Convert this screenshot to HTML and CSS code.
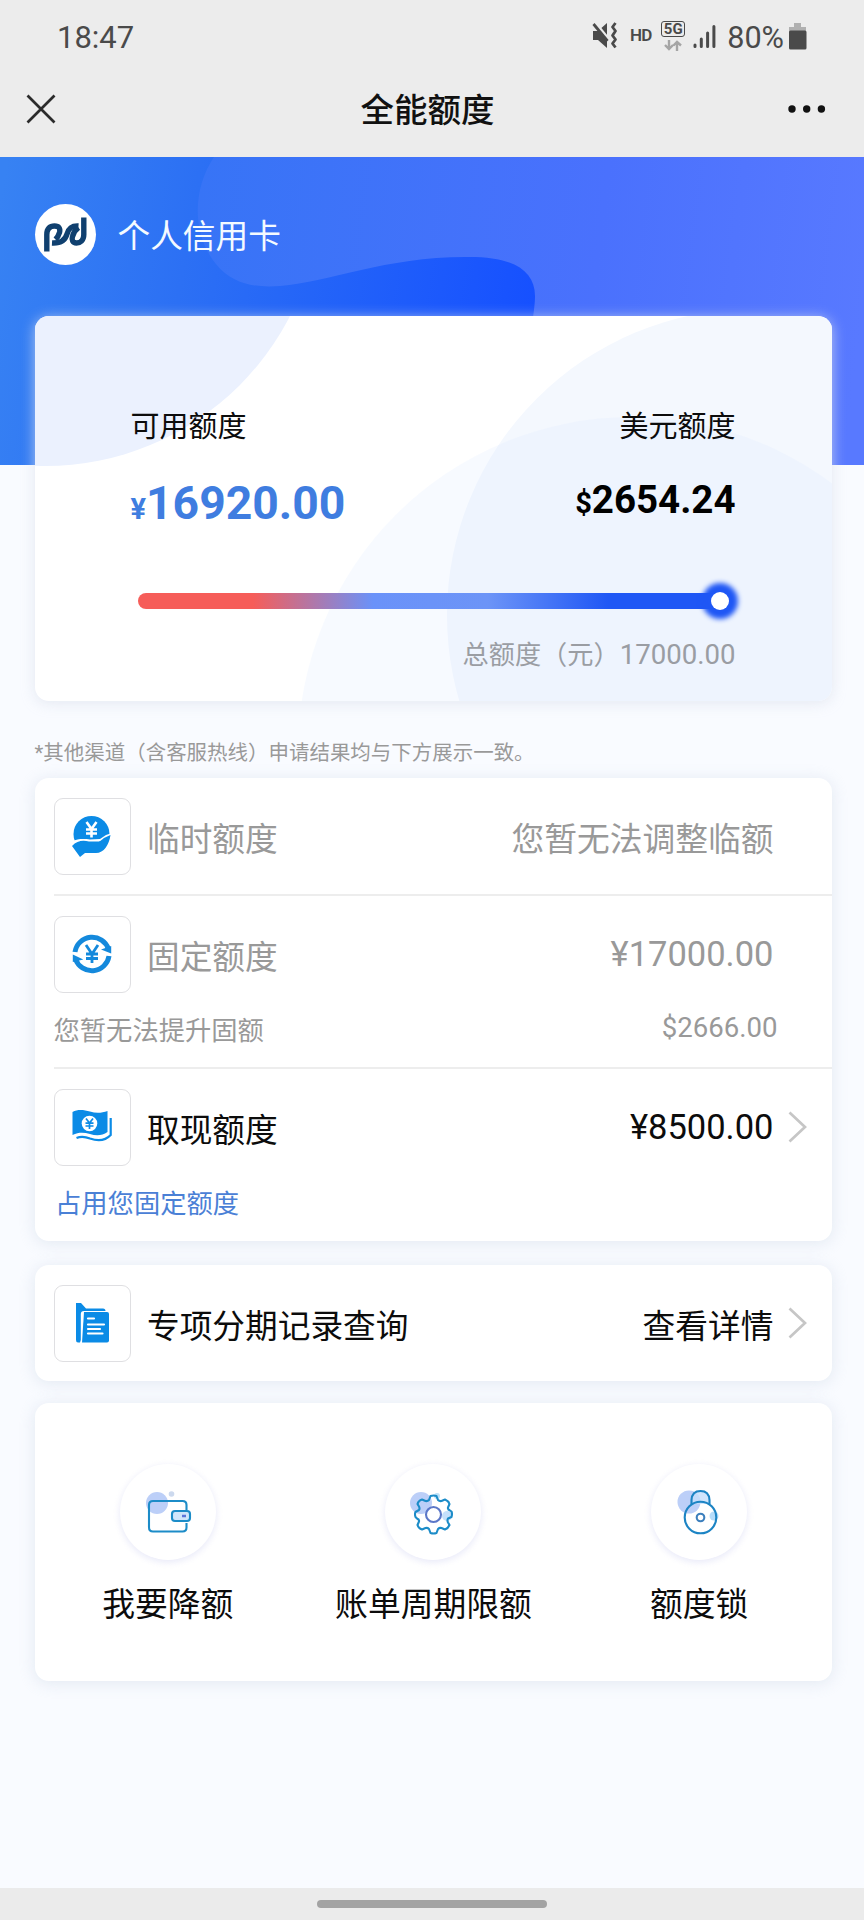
FILE: index.html
```html
<!DOCTYPE html>
<html lang="zh-CN">
<head>
<meta charset="utf-8">
<title>全能额度</title>
<link rel="stylesheet" href="styles.css">
</head>
<body>
<header class="top">
  <div class="status">
    <span class="time">18:47</span>
    <div class="indicators">
      <svg class="mute" width="26" height="28" viewBox="0 0 26 28">
        <path d="M1 9h5l9-8v25l-9-8H1z" fill="#4a4a4a"/>
        <path d="M1 -2l17 21" stroke="#ececec" stroke-width="3"/>
        <path d="M1.500 2l14 17" stroke="#4a4a4a" stroke-width="2.800"/>
        <path d="M23.500 1l-3 4 3 4-3 4.500 3 4-3 4 3 4" fill="none" stroke="#4a4a4a" stroke-width="2.800" stroke-linejoin="round"/>
      </svg>
      <span class="hd">HD</span>
      <div class="net">
        <span class="net-label">5G</span>
        <svg width="18" height="11" viewBox="0 0 18 11" fill="none" stroke="#a5a5a5" stroke-width="2.400"><path d="M5 0v9M1 5l4 4 4-4M13 11V2M9.500 5.500L13 2l4 3.500"/></svg>
      </div>
      <svg class="signal" width="23" height="25" viewBox="0 0 23 25" stroke="#4a4a4a" stroke-width="3" stroke-linecap="round"><path d="M2 21v1.500M8.300 15v7.500M14.600 9v13.500M20.900 2.500v20"/></svg>
      <span class="percent">80%</span>
      <svg class="battery" width="18" height="27" viewBox="0 0 18 27"><path d="M5 0h7v4h5v6H0V4h5z" fill="#b0b0b0"/><rect y="7.500" width="17.500" height="19" rx="1.500" fill="#4a4a4a"/></svg>
    </div>
  </div>
  <nav class="nav">
    <svg width="30" height="30" viewBox="0 0 30 30" stroke="#2b2b2b" stroke-width="2.700"><path d="M1.500 1.500l27 27M28.500 1.500l-27 27"/></svg>
    <h1 class="title">全能额度</h1>
    <svg width="38" height="8" viewBox="0 0 38 8" fill="#111"><circle cx="4" cy="4" r="3.700"/><circle cx="18.700" cy="4" r="3.700"/><circle cx="33.400" cy="4" r="3.700"/></svg>
  </nav>
</header>

<main class="page">
  <section class="hero">
    <svg class="hero-bg" width="864" height="308" viewBox="0 157 864 308">
      <defs>
        <linearGradient id="base" gradientUnits="userSpaceOnUse" x1="0" y1="200" x2="540" y2="290">
          <stop offset="0" stop-color="#3782f3"/><stop offset=".35" stop-color="#2c70f4"/><stop offset="1" stop-color="#1650ff"/>
        </linearGradient>
        <linearGradient id="wave" gradientUnits="userSpaceOnUse" x1="195" y1="220" x2="864" y2="300">
          <stop offset="0" stop-color="#3774f6"/><stop offset=".6" stop-color="#4a71fd"/><stop offset="1" stop-color="#5879ff"/>
        </linearGradient>
      </defs>
      <rect y="157" width="864" height="308" fill="url(#base)"/>
      <path d="M214 157C192 190 192 235 216 264C232 284 255 288 280 286C330 282 385 257 465 257C512 256 535 270 535 296C535 318 525 350 515 465H864V157Z" fill="url(#wave)"/>
    </svg>
    <div class="brand">
      <span class="logo">
        <svg width="61" height="61" viewBox="35 204.500 61 61" fill="none" stroke="#10406f" stroke-width="5.400">
          <path d="M46.800 252V235C46.800 229 50 226.500 54.500 226.500C59 226.500 60.500 229 59.500 233C58.500 236.500 57.500 238 55.500 240"/>
          <path d="M78.500 226.500C71 226 68.500 229.500 67 234.500C65.300 240.500 61 244 52 243.500"/>
          <path d="M83.800 218V235C83.800 241 80 243.500 76.500 243.500C72.500 243.500 71.500 240.500 72.500 237C73.500 233 75 230.500 78.500 228"/>
        </svg>
      </span>
      <span class="brand-name">个人信用卡</span>
    </div>
    <div class="quota">
      <svg class="quota-bg" width="797" height="385" viewBox="35 316 797 385">
        <circle cx="45" cy="191" r="275" fill="#ebf1fe"/>
        <circle cx="753" cy="615" r="306" fill="#f4f8fe"/>
        <circle cx="632" cy="751" r="334" fill="#d9e6fd" fill-opacity=".22"/>
      </svg>
      <div class="quota-row">
        <div>
          <div class="quota-label">可用额度</div>
          <div class="cny"><span class="unit">¥</span>16920.00</div>
        </div>
        <div class="right">
          <div class="quota-label">美元额度</div>
          <div class="usd"><span class="unit">$</span>2654.24</div>
        </div>
      </div>
      <div class="track"><span class="thumb"></span></div>
      <div class="total">总额度（元）<span class="total-num">17000.00</span></div>
    </div>
  </section>

  <p class="note">*其他渠道（含客服热线）申请结果均与下方展示一致。</p>

  <section class="panel">
    <div class="item muted">
      <div class="line">
        <span class="box"><svg width="40" height="42" viewBox="0 0 40 42">
          <circle cx="19.500" cy="19" r="18" fill="#0b8be6"/>
          <path d="M0 26.500C6 23.500 12 24 18 24.500L28 24L34 20L40 18V42H0Z" fill="#fff"/>
          <path d="M0 31C5 25.500 11 25 17 26.500H26C29 26.500 30 24 33 22.500L38.500 20C37 30 32 38 24 38H13L8 42Z" fill="#0b8be6"/>
          <path d="M14.500 7l5 7 5-7M19.500 13.500v9M14 14.500h11M14 18.500h11" fill="none" stroke="#fff" stroke-width="2.600"/>
        </svg></span>
        <span class="name">临时额度</span>
        <span class="value">您暂无法调整临额</span>
      </div>
    </div>
    <div class="item muted">
      <div class="line">
        <span class="box"><svg width="40" height="42" viewBox="0 0 40 42">
          <path d="M3 19A17.300 17.300 0 0 1 36.500 16M37 23A17.300 17.300 0 0 1 3.500 26" fill="none" stroke="#1489dc" stroke-width="5"/>
          <path d="M39.200 13v7.500L29 16.500ZM.8 29V21.500l10.500 5Z" fill="#1489dc"/>
          <path d="M14 12l6 9 6-9M20 20v10M14 21h12M14 25.500h12" fill="none" stroke="#1489dc" stroke-width="2.800"/>
        </svg></span>
        <span class="name">固定额度</span>
        <span class="value amount">¥17000.00</span>
      </div>
      <div class="sub"><span>您暂无法提升固额</span><span class="sub-num">$2666.00</span></div>
    </div>
    <div class="item">
      <div class="line">
        <span class="box"><svg width="40" height="42" viewBox="0 0 40 42">
          <path d="M.5 6C6 3 12 4 18 5.500C24 7.500 30 7 35.500 5V26C30 30 24 30 18 28C12 26.500 7 26 .5 29Z" fill="#0b8be6"/>
          <path d="M38.700 12V29C33 35 25 35 18 32.500C13 30.500 8 30.500 4.500 32" fill="none" stroke="#0b8be6" stroke-width="2.200"/>
          <circle cx="17.500" cy="17.500" r="7.800" fill="#fff"/>
          <path d="M14 12.500l3.500 4.500L21 12.500M17.500 16.500v6.500M13.500 17.200h8M13.500 20h8" fill="none" stroke="#0b8be6" stroke-width="1.700"/>
        </svg></span>
        <span class="name">取现额度</span>
        <span class="value amount">¥8500.00</span>
        <svg class="chevron" width="19" height="32" viewBox="0 0 19 32"><path d="M1.500 1.500L17 16 1.500 30.500"/></svg>
      </div>
      <div class="sub link">占用您固定额度</div>
    </div>
  </section>

  <section class="panel records">
    <div class="item">
      <div class="line">
        <span class="box"><svg width="40" height="42" viewBox="0 0 40 42">
          <path d="M4 1H9L14 6.500H31Q33.500 6.500 33.500 9H12Q8.800 9 8.800 12V38L8 40.500H6Q4 40.500 4 38Z" fill="#0b8be6"/>
          <path d="M12 10H35Q37 10 37 12V38.500Q37 40.500 35 40.500H10Z" fill="#0b8be6"/>
          <path d="M16 16.500h6M16 22.500h16M16 27h12M16 31.500h14.500" stroke="#fff" stroke-width="2.200" stroke-linecap="round"/>
        </svg></span>
        <span class="name">专项分期记录查询</span>
        <span class="value">查看详情</span>
        <svg class="chevron" width="19" height="32" viewBox="0 0 19 32"><path d="M1.500 1.500L17 16 1.500 30.500"/></svg>
      </div>
    </div>
  </section>

  <section class="panel actions">
    <div class="action">
      <span class="disc"><svg width="96" height="96" viewBox="0 0 96 96" fill="none" stroke="#1c8cc8" stroke-width="2.100">
        <circle cx="37" cy="39" r="11" fill="#bccff8" stroke="none"/><circle cx="51.500" cy="30" r="2.800" fill="#ccd9ee" stroke="none"/>
        <path d="M66.500 46V41Q66.500 37 62.500 37H33Q29 37 29 41V63.500Q29 67.500 33 67.500H62.500Q66.500 67.500 66.500 63.500V59"/>
        <rect x="52" y="47" width="18" height="10" rx="3" fill="#d0e6fb"/><path d="M62 52h4" stroke="#5c75d8" stroke-width="2.500"/>
      </svg></span>
      <span>我要降额</span>
    </div>
    <div class="action">
      <span class="disc"><svg width="96" height="96" viewBox="0 0 96 96" fill="none" stroke="#1c8cc8" stroke-width="2.100">
        <circle cx="36" cy="39" r="11" fill="#bccff8" stroke="none"/><circle cx="52" cy="32" r="3" fill="#bce0f8" stroke="none"/><circle cx="62" cy="52" r="5" fill="#c5dffb" stroke="none"/>
        <path stroke-linejoin="round" d="M45.500 32Q48.500 31 51.500 32L53 36Q54.500 37.500 56.500 37L60 35.500Q63.500 37 64.500 40L63 43.500Q62.500 45.500 65 46.500L66.500 47.500Q67.500 50 66.500 53L63 54.500Q62 56.500 63 58.500L64.500 61Q63 64.500 60 65.500L56.500 64Q54.500 63.500 53 65L51.500 69Q48.500 70 45.500 69L44 65Q42.500 63.500 40.500 64L37 65.500Q33.500 64.500 32.500 61L34 57.500Q34.500 55.500 32 54.500L30.500 53Q29.500 50 30.500 48L34 46Q35 44.500 34 42.500L32.500 40Q33.500 36.500 37 35.500L40.500 37Q42.500 37.500 44 36Z"/>
        <circle cx="48.500" cy="50.500" r="7.500" stroke="#5b77c8"/>
      </svg></span>
      <span>账单周期限额</span>
    </div>
    <div class="action">
      <span class="disc"><svg width="96" height="96" viewBox="0 0 96 96" fill="none" stroke="#1c84c4" stroke-width="2.100">
        <circle cx="38" cy="38" r="11.500" fill="#bccff8" stroke="none"/><circle cx="63" cy="52" r="4.500" fill="#b5dcfa" stroke="none"/>
        <path d="M40.500 40V36Q41 27 49.500 27Q58 27 58.500 36V40" fill="#c5dffb" fill-opacity=".8"/>
        <circle cx="49.500" cy="53.500" r="15.800"/><circle cx="49.500" cy="53.500" r="3.800" stroke="#3c7fbd"/>
      </svg></span>
      <span>额度锁</span>
    </div>
  </section>
</main>
<footer class="gesture"><span class="pill"></span></footer>
</body>
</html>
```

FILE: styles.css
```css
* { box-sizing: border-box; }
body {
  margin: 0;
  width: 864px;
  height: 1920px;
  display: flex;
  flex-direction: column;
  overflow: hidden;
  background: #f9fbff;
  color: #0c0c0c;
  font-family: Roboto, "Noto Sans CJK SC", sans-serif;
}
svg { display: block; flex: none; }

.top { height: 157px; background: #ececec; }
.status {
  height: 74px;
  padding: 0 57px 0 57px;
  display: flex;
  justify-content: space-between;
  color: #4a4a4a;
}
.time { font-size: 31px; line-height: 75px; }
.indicators { display: flex; align-items: flex-start; }
.mute { margin-top: 22px; }
.hd { margin: 25px 0 0 12px; font-size: 17px; line-height: 20px; font-weight: 600; letter-spacing: -1px; }
.net { margin: 21px 0 0 10px; width: 24px; display: flex; flex-direction: column; align-items: center; gap: 3px; }
.net-label {
  width: 24px;
  height: 16px;
  border: 1px solid #4a4a4a;
  border-radius: 3px;
  font-size: 15px;
  line-height: 15px;
  font-weight: 700;
  text-align: center;
}
.signal { margin: 24px 0 0 8px; }
.percent { margin-left: 11px; font-size: 30.600px; line-height: 75px; }
.battery { margin: 23px 0 0 5px; }
.nav {
  height: 70px;
  padding: 0 38px 0 26px;
  display: flex;
  align-items: center;
  justify-content: space-between;
}
.title { margin: 0; padding: 4px 0 0 11px; font-size: 33.500px; line-height: 40px; font-weight: 500; color: #111; }

.page { flex: 1; }
.hero { position: relative; padding: 47px 32px 0 34.500px; }
.hero-bg { position: absolute; left: 0; top: 0; }
.brand { position: relative; display: flex; align-items: center; gap: 22px; height: 61px; }
.logo { width: 61px; height: 61px; border-radius: 50%; background: #fff; overflow: hidden; }
.brand-name { padding-top: 5px; font-size: 32.700px; line-height: 40px; color: #f4faff; }

.quota {
  position: relative;
  width: 797px;
  height: 385px;
  margin-top: 51px;
  padding: 91px 96px 0 96px;
  border-radius: 14px;
  background: #fff;
  box-shadow: 0 2px 14px rgba(220, 225, 236, .75);
}
.quota-bg { position: absolute; left: 0; top: 0; border-radius: 14px; }
.quota-row { position: relative; display: flex; justify-content: space-between; height: 122px; }
.quota-label { font-size: 29px; line-height: 40px; }
.right { text-align: right; }
.cny { margin-top: 31px; font-size: 46.300px; line-height: 50px; font-weight: 700; color: #3f7de0; }
.usd { margin-top: 28px; font-size: 38.500px; line-height: 50px; font-weight: 700; color: #000; }
.unit { font-size: 29px; line-height: 0; }
.track {
  position: relative;
  width: 588px;
  height: 16px;
  margin: 64px 0 0 7px;
  border-radius: 8px;
  background: linear-gradient(90deg, #f65d59 0, #f65d59 115px, #6a92f9 235px, #6c94f7 350px, #1f57f5 470px, #1f57f5 100%);
}
.thumb {
  position: absolute;
  right: -3px;
  top: -1px;
  width: 18px;
  height: 18px;
  border-radius: 50%;
  background: #fff;
  box-shadow: 0 0 5px 9px #1f57f5;
}
.total { position: relative; margin-top: 31px; font-size: 26.200px; line-height: 30px; text-align: right; color: #9a9da3; white-space: nowrap; }
.total-num { font-size: 27.600px; line-height: 0; }

.note { margin: 37px 34.500px 0; height: 40px; font-size: 20.480px; line-height: 30px; color: #999; }

.panel {
  width: 797px;
  margin-left: 34.500px;
  border-radius: 14px;
  background: #fff;
  box-shadow: 0 2px 16px rgba(214, 222, 234, .65);
}
.item { margin-left: 19px; padding-top: 19px; }
.item + .item { border-top: 2px solid #ededed; }
.item:nth-child(1) { height: 116px; }
.item:nth-child(2) { height: 173px; }
.item:nth-child(3) { height: 174px; }
.line { position: relative; height: 78px; padding-right: 58px; display: flex; align-items: center; }
.box {
  width: 77px;
  height: 77px;
  border: 1px solid #dfdfe2;
  border-radius: 9px;
  display: grid;
  place-items: center;
}
.name { margin-left: 16.500px; padding-top: 7px; font-size: 32.700px; line-height: 40px; }
.value { margin-left: auto; padding-top: 7px; font-size: 32.750px; line-height: 40px; }
.amount { font-size: 34.500px; padding-top: 0; }
.chevron { position: absolute; right: 24.500px; top: 22.500px; fill: none; stroke: #c6c6c6; stroke-width: 2.700; }
.sub { margin: 20px 54px 0 0; display: flex; justify-content: space-between; font-size: 26.300px; line-height: 36px; }
.sub-num { font-size: 27.600px; line-height: 30px; }
.link { color: #4a80d6; padding-left: 1.500px; }
.muted { color: #999; }
.records { margin-top: 24px; }
.actions { margin-top: 22px; height: 278px; padding-top: 61px; display: grid; grid-template-columns: repeat(3, 1fr); }
.action { display: flex; flex-direction: column; align-items: center; gap: 25px; padding-left: 1px; font-size: 32.800px; line-height: 40px; }
.disc { width: 96px; height: 96px; border-radius: 50%; background: #fff; box-shadow: 0 2px 7px rgba(215, 216, 244, .6); }

.gesture { height: 32px; padding-top: 12px; background: #ebebeb; }
.pill { display: block; width: 230px; height: 8px; margin: 0 auto; border-radius: 4px; background: #a3a3a3; }
```
